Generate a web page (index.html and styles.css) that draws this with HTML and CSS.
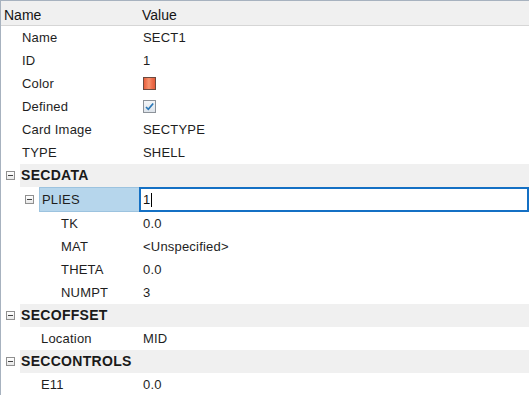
FILE: index.html
```html
<!DOCTYPE html>
<html>
<head>
<meta charset="utf-8">
<link rel="stylesheet" href="styles.css">
</head>
<body>
<div class="panel">
  <div class="head">
    <div class="hname">Name</div>
    <div class="hval">Value</div>
  </div>

  <div class="row"><div class="name l1">Name</div><div class="val">SECT1</div></div>
  <div class="row"><div class="name l1">ID</div><div class="val">1</div></div>
  <div class="row"><div class="name l1">Color</div><div class="val"><span class="swatch"></span></div></div>
  <div class="row"><div class="name l1">Defined</div><div class="val">
    <span class="check"><svg width="11" height="11" viewBox="0 0 11 11"><path d="M2 6 L4.3 8.3 L9.2 2.5" fill="none" stroke="#2a78b8" stroke-width="1.7"/></svg></span>
  </div></div>
  <div class="row"><div class="name l1">Card Image</div><div class="val">SECTYPE</div></div>
  <div class="row"><div class="name l1">TYPE</div><div class="val">SHELL</div></div>

  <div class="group"><div class="gutter"><span class="tog"></span></div><div class="gbar">SECDATA</div></div>

  <div class="row plies">
    <div class="name pname"><span class="tog"></span><span class="sel">PLIES</span></div>
    <div class="val edit">1<span class="caret"></span></div>
  </div>
  <div class="row"><div class="name l3">TK</div><div class="val">0.0</div></div>
  <div class="row"><div class="name l3">MAT</div><div class="val">&lt;Unspecified&gt;</div></div>
  <div class="row"><div class="name l3">THETA</div><div class="val">0.0</div></div>
  <div class="row"><div class="name l3">NUMPT</div><div class="val">3</div></div>

  <div class="group"><div class="gutter"><span class="tog"></span></div><div class="gbar">SECOFFSET</div></div>
  <div class="row"><div class="name l2">Location</div><div class="val">MID</div></div>

  <div class="group"><div class="gutter"><span class="tog"></span></div><div class="gbar">SECCONTROLS</div></div>
  <div class="row"><div class="name l2">E11</div><div class="val">0.0</div></div>
</div>
</body>
</html>
```
FILE: styles.css
```css
html, body {
  margin: 0;
  padding: 0;
  background: #ffffff;
}
.panel {
  width: 528px;
  height: 394px;
  overflow: hidden;
  border-left: 1px solid #a7b2bf;
  border-top: 1px solid #a7b2bf;
  font-family: "Liberation Sans", Arial, sans-serif;
  font-size: 13px;
  letter-spacing: 0.2px;
  color: #1e1e1e;
  background: #ffffff;
}
.head {
  display: grid;
  grid-template-columns: 138px 1fr;
  height: 19px;
  padding-top: 5px;
  line-height: 19px;
  font-size: 14px;
  letter-spacing: 0;
  background: #f0f0f0;
  border-bottom: 1px solid #d6d6d6;
  color: #141414;
}
.hname { padding-left: 3px; }
.hval { padding-left: 3px; }
.row {
  display: grid;
  grid-template-columns: 138px 1fr;
  height: 23px;
  line-height: 23px;
}
.name { white-space: nowrap; }
.l1 { padding-left: 21px; }
.l2 { padding-left: 40px; }
.l3 { padding-left: 60px; }
.val { padding-left: 4px; white-space: nowrap; display: flex; align-items: center; }
.swatch {
  display: inline-block;
  width: 11px;
  height: 11px;
  border: 1px solid #6b4a40;
  background: linear-gradient(to right, #e8603e 0%, #f7946f 45%, #ef7250 70%, #e35a38 100%);
}
.check {
  display: inline-flex;
  align-items: center;
  justify-content: center;
  width: 11px;
  height: 11px;
  border: 1px solid #8d939a;
  background: linear-gradient(#f4f6f8, #dde3ea);
}
.group {
  display: flex;
  height: 23px;
  line-height: 23px;
}
.gutter {
  width: 19px;
  display: flex;
  align-items: center;
  padding-left: 5px;
  box-sizing: border-box;
}
.gbar {
  flex: 1;
  background: #f0f0f0;
  padding-left: 1px;
  font-weight: bold;
  font-size: 14px;
  letter-spacing: 0.3px;
  color: #1a1a1a;
}
.tog {
  display: inline-block;
  position: relative;
  width: 7px;
  height: 7px;
  border: 1px solid #909090;
  background: linear-gradient(#ffffff, #e8e8e8);
}
.tog::after {
  content: "";
  position: absolute;
  left: 1px;
  right: 1px;
  top: 3px;
  height: 1px;
  background: #444;
}
.plies { height: 25px; line-height: 23px; }
.pname {
  display: flex;
  align-items: center;
  padding-left: 24px;
}
.pname .tog { margin-right: 5px; }
.sel {
  flex: 1;
  height: 23px;
  background: #b6d6ec;
  border: 1px solid #9cc3df;
  border-right: none;
  padding-left: 2px;
  line-height: 23px;
}
.edit {
  border: 2px solid #1470c4;
  padding-left: 2px;
  box-sizing: border-box;
  height: 25px;
  color: #111;
}
.caret {
  display: inline-block;
  width: 1px;
  height: 14px;
  margin-left: 1px;
  background: #000;
}
```
